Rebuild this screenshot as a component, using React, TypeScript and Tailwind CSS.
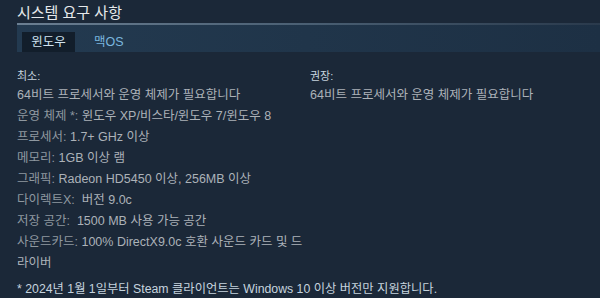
import React from "react"

const font = { fontFamily: '"Liberation Sans", "Noto Sans CJK KR", sans-serif' }

type Row = { k?: string; v: string }

const minimum: Row[] = [
  { v: "64비트 프로세서와 운영 체제가 필요합니다" },
  { k: "운영 체제 *:", v: " 윈도우 XP/비스타/윈도우 7/윈도우 8" },
  { k: "프로세서:", v: " 1.7+ GHz 이상" },
  { k: "메모리:", v: " 1GB 이상 램" },
  { k: "그래픽:", v: " Radeon HD5450 이상, 256MB 이상" },
  { k: "다이렉트X:", v: "  버전 9.0c" },
  { k: "저장 공간:", v: "  1500 MB 사용 가능 공간" },
  { k: "사운드카드:", v: " 100% DirectX9.0c 호환 사운드 카드 및 드라이버" },
]

function Column({ title, rows }: { title: string; rows: Row[] }) {
  return (
    <div className="w-[293px] shrink-0 pr-[5px]">
      <div className="text-[11px] leading-[16px] text-[#c6d4df]">{title}</div>
      <ul className="mt-[1px] text-[12.5px] leading-[21px] text-[#acb2b8]">
        {rows.map((r, i) => (
          <li key={i} className="whitespace-pre-wrap">
            {r.k && <span className="text-[#8f98a0]">{r.k}</span>}
            {r.v}
          </li>
        ))}
      </ul>
    </div>
  )
}

export default function App() {
  return (
    <div className="h-[298px] w-[600px] overflow-hidden bg-[#1b2838] pl-[17px]" style={font}>
      <h2 className="pt-[3px] text-[15px] leading-[19px] text-[#e5e8eb]">시스템 요구 사항</h2>
      <div className="mt-[1px] h-[2px] bg-gradient-to-r from-[#6b7f92] via-[#4a5f73] to-[#2a3a4c]" />
      <div className="flex h-[27px] items-end bg-gradient-to-r from-[#233a50] to-[#1d3044] pl-[5px]">
        <div className="flex h-[20px] w-[53px] items-center justify-center bg-[#121e2b] text-[12.5px] text-[#d0e3f0]">
          윈도우
        </div>
        <div className="flex h-[20px] items-center pl-[19px] text-[12.5px] text-[#7ab6de]">맥OS</div>
      </div>
      <div className="mt-[16px] flex">
        <Column title="최소:" rows={minimum} />
        <Column title="권장:" rows={[minimum[0]]} />
      </div>
      <p className="mt-[6px] text-[12.3px] leading-[18px] text-[#c6d4df]">
        * 2024년 1월 1일부터 Steam 클라이언트는 Windows 10 이상 버전만 지원합니다.
      </p>
    </div>
  )
}
